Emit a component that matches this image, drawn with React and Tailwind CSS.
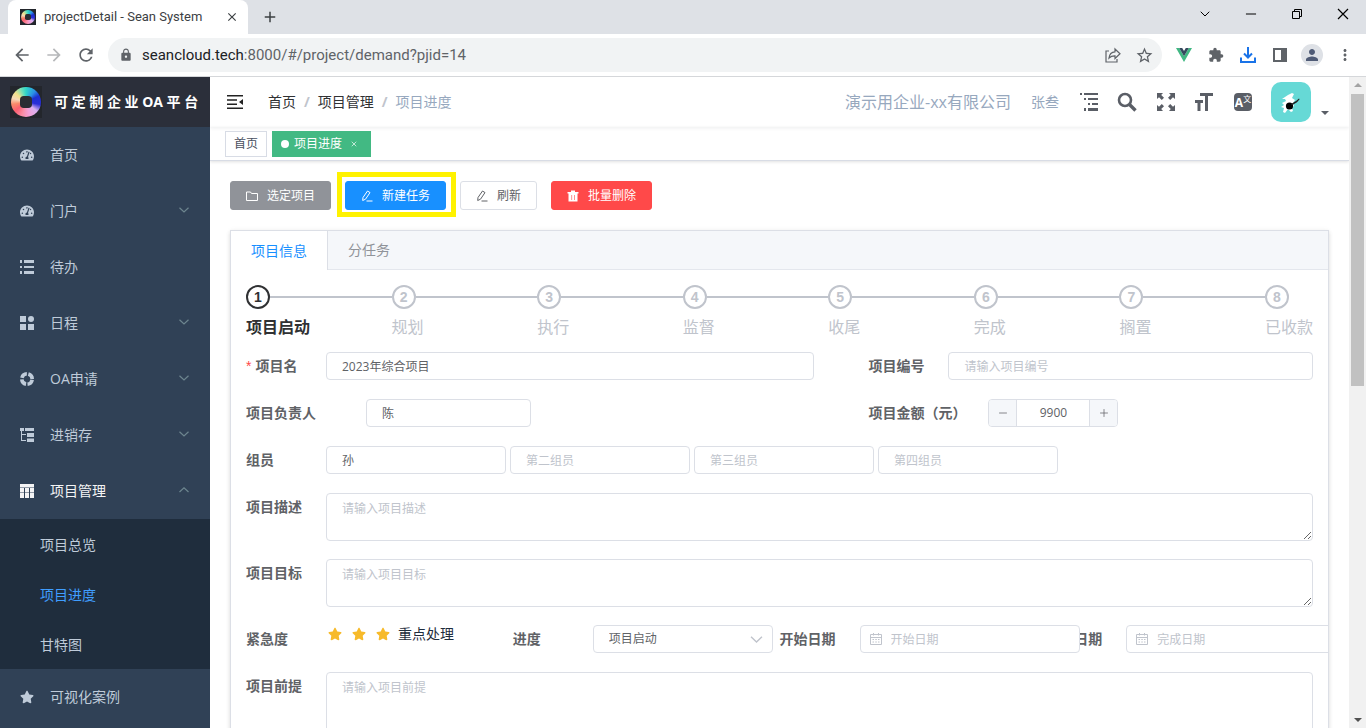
import React, { useState } from "react";
import {
  MdArrowBack,
  MdArrowForward,
  MdRefresh,
  MdLock,
  MdStarBorder,
  MdExtension,
  MdPerson,
  MdMoreVert,
  MdClose,
  MdAdd,
} from "react-icons/md";
import { FaTachometerAlt, FaStar } from "react-icons/fa";
import { ChevronDown, Minus, Plus, X } from "lucide-react";

const steps = ["项目启动", "规划", "执行", "监督", "收尾", "完成", "搁置", "已收款"];

const inputBase =
  "h-7 min-w-0 rounded border border-[#dcdfe6] bg-white px-[15px] text-xs text-[#606266] placeholder:text-[#c0c4cc] focus:outline-none focus:border-[#1890ff]";

function LogoMark({ className }) {
  return (
    <span className={"flex shrink-0 bg-[#23262c] p-px " + className} aria-hidden="true">
      <span className="flex flex-1 items-center justify-center rounded-full bg-[conic-gradient(#2fd6c8,#2a8fe6_40deg,#1c2fd0_65deg,#2a2fd8_100deg,#d9b0f0_130deg,#f3a0d8_165deg,#f98fa8_195deg,#fb5f70_230deg,#f98a6a_260deg,#f6d9b8_285deg,#f3e08a_310deg,#6fe0b8_340deg,#2fd6c8)]">
        <span className="size-5/12 rounded-[30%] bg-[#2b2d33]" />
      </span>
    </span>
  );
}

function Chevron({ up, className }) {
  return (
    <svg viewBox="0 0 14 14" className={className} fill="none" stroke="currentColor" strokeWidth="1.200" aria-hidden="true">
      <path d={up ? "M2.500 9L7 4.800 11.500 9" : "M2.500 4.800L7 9l4.500-4.200"} />
    </svg>
  );
}

function ListIcon() {
  return (
    <svg viewBox="0 0 14 14" className="size-3.5" fill="currentColor">
      <path d="M0 0h2v3H0zM4 0h10v3H4zM0 6h2v2H0zM4 6h10v2H4zM0 11h2v3H0zM4 11h10v3H4z" />
    </svg>
  );
}

function BlocksIcon() {
  return (
    <svg viewBox="0 0 14 14" className="size-3.5" fill="currentColor">
      <path d="M0 0h6v6H0zM0 8h6v6H0zM8 8h6v6H8z" />
      <circle cx="11" cy="3" r="3" />
    </svg>
  );
}

function RingIcon() {
  return (
    <svg viewBox="0 0 14 14" className="size-3.5" fill="none" stroke="currentColor">
      <circle cx="7" cy="7" r="5.200" strokeWidth="3.600" strokeDasharray="6.600 1.568" strokeDashoffset="-0.800" />
    </svg>
  );
}

function TreeIcon() {
  return (
    <svg viewBox="0 0 14 14" className="size-3.5" fill="currentColor">
      <path d="M0 0h4v3H2v3h4v1H2v5h4v1H1V3H0zM5 0h9v3H5zM7 5h7v4H7zM7 10.500h7V14H7z" />
    </svg>
  );
}

function TableIcon() {
  return (
    <svg viewBox="0 0 14 14" className="size-3.5" fill="currentColor">
      <path d="M0 0h14v3.500H0zM0 4h4v4.500H0zM5 4h4v4.500H5zM10 4h4v4.500h-4zM0 9h4v5H0zM5 9h4v5H5zM10 9h4v5h-4z" />
    </svg>
  );
}

const menu = [
  { label: "首页", icon: <FaTachometerAlt className="size-3.5" /> },
  { label: "门户", icon: <FaTachometerAlt className="size-3.5" />, arrow: true },
  { label: "待办", icon: <ListIcon /> },
  { label: "日程", icon: <BlocksIcon />, arrow: true },
  { label: "OA申请", icon: <RingIcon />, arrow: true },
  { label: "进销存", icon: <TreeIcon />, arrow: true },
  { label: "项目管理", icon: <TableIcon />, open: true, children: ["项目总览", "项目进度", "甘特图"] },
  { label: "可视化案例", icon: <FaStar className="size-3.5" /> },
];

function BrowserBar() {
  return (
    <header className="shrink-0 border-b border-[#d5d7da] bg-white text-[#5f6368]">
      <div className="flex h-[34px] bg-[#dee1e6]">
        <div className="ml-2 flex w-60 items-center rounded-t-lg bg-white pr-[9px] pl-3 text-[#3c4043]">
          <LogoMark className="size-4" />
          <span className="ml-2 flex-1 whitespace-nowrap font-[Roboto,sans-serif] text-[13px]">projectDetail - Sean System</span>
          <button aria-label="关闭标签页">
            <MdClose className="size-3.5" />
          </button>
        </div>
        <button className="ml-[13px] text-[#3c4043]" aria-label="新标签页">
          <MdAdd className="size-[18px]" />
        </button>
        <div className="ml-auto flex items-center gap-[30px] pr-[15px] pb-1.5 text-black">
          <button aria-label="搜索标签页">
            <ChevronDown className="size-4" strokeWidth={1.5} />
          </button>
          <button aria-label="最小化">
            <Minus className="size-4" strokeWidth={1.5} />
          </button>
          <button aria-label="还原">
            <svg viewBox="0 0 16 16" className="size-4" fill="none" stroke="currentColor">
              <path d="M3.500 5.500h7v7h-7zM5.500 5.500v-2h7v7h-2" />
            </svg>
          </button>
          <button aria-label="关闭">
            <svg viewBox="0 0 16 16" className="size-4" fill="none" stroke="currentColor" strokeWidth="1.200">
              <path d="M3 3l10 10M13 3L3 13" />
            </svg>
          </button>
        </div>
      </div>
      <div className="flex h-[42px] items-center pr-[13px] pl-3">
        <button aria-label="后退">
          <MdArrowBack className="size-5" />
        </button>
        <button className="ml-3 text-[#b6b8ba]" aria-label="前进">
          <MdArrowForward className="size-5" />
        </button>
        <button className="ml-3" aria-label="刷新页面">
          <MdRefresh className="size-5" />
        </button>
        <div className="ml-3 flex h-[34px] flex-1 items-center rounded-full bg-[#f1f3f4] pr-2 pl-[11px]">
          <MdLock className="size-3.5" />
          <span className="ml-[9px] flex-1 font-[Roboto,sans-serif] text-[15px]">
            <span className="text-[#202124]">seancloud.tech</span>:8000/#/project/demand?pjid=14
          </span>
          <button aria-label="分享">
            <svg viewBox="0 0 16 16" className="size-4" fill="none" stroke="currentColor" strokeWidth="1.200">
              <path d="M4 4H1v11h11v-3" />
              <path d="M4 11c.5-4 2.500-6 6-6.200V2l5 4.800-5 4.700V8.800C7.500 8.700 5.500 9.500 4 11z" />
            </svg>
          </button>
          <button className="ml-3.5" aria-label="收藏">
            <MdStarBorder className="size-[19px]" />
          </button>
        </div>
        <div className="ml-3.5 flex items-center gap-4">
          <svg viewBox="0 0 16 16" className="size-4" aria-hidden="true">
            <path d="M0 1h3.200L8 9.200 12.800 1H16L8 15z" fill="#41b883" />
            <path d="M3.200 1h3L8 4l1.800-3h3L8 9.200z" fill="#35495e" />
          </svg>
          <MdExtension className="size-4" />
          <svg viewBox="0 0 16 16" className="size-4" fill="none" stroke="#1a73e8" strokeWidth="2" aria-hidden="true">
            <path d="M8 0v10M4 6.500l4 4 4-4M1 10.500V15h14v-4.500" />
          </svg>
          <svg viewBox="0 0 16 16" className="size-4" aria-hidden="true">
            <path d="M1 1h14v14H1zM3 3v10h6V3z" fill="currentColor" fillRule="evenodd" />
          </svg>
          <span className="-mx-[3px] flex size-[22px] items-center justify-center rounded-full bg-[#dee1e6] text-[#4f5b76]">
            <MdPerson className="size-[18px]" />
          </span>
          <MdMoreVert className="-mr-px size-[18px]" />
        </div>
      </div>
    </header>
  );
}

function Sidebar() {
  return (
    <aside className="w-[210px] shrink-0 overflow-hidden bg-[#304156] text-sm text-[#bfcbd9]">
      <a href="#/" className="flex h-[50px] items-center bg-[#2b2f3a] pl-2.5 font-bold whitespace-nowrap text-white">
        <LogoMark className="mr-3 size-8" />
        可 定 制 企 业 OA 平 台
      </a>
      <nav>
        {menu.map((item) => (
          <div key={item.label}>
            <a href="#/" className={"flex h-14 items-center px-5 " + (item.open ? "text-[#f4f4f5]" : "")}>
              {item.icon}
              <span className="ml-4 flex-1">{item.label}</span>
              {(item.arrow || item.open) && <Chevron up={item.open} className="-mr-px mb-0.5 size-3.5 text-[#6d868f]" />}
            </a>
            {item.children && (
              <div className="bg-[#1f2d3d]">
                {item.children.map((child) => (
                  <a
                    key={child}
                    href="#/project"
                    className={"flex h-[50px] items-center pt-px pl-10 " + (child === "项目进度" ? "text-[#409eff]" : "")}
                  >
                    {child}
                  </a>
                ))}
              </div>
            )}
          </div>
        ))}
      </nav>
    </aside>
  );
}

function Navbar() {
  return (
    <div className="flex h-[50px] items-center pr-5 pl-4 text-sm shadow-[0_1px_4px_rgba(0,21,41,0.08)]">
      <button aria-label="收起菜单" className="text-[#222]">
        <svg viewBox="0 0 18 16" className="h-4 w-[18px]" fill="currentColor">
          <path d="M1 1h16v1.500H1zM1 5.200h10v1.500H1zM1 9.400h10v1.500H1zM1 13.500h16V15H1zM17 5v6l-4-3z" />
        </svg>
      </button>
      <nav className="ml-6 flex gap-2">
        <a href="#/" className="text-[#303133]">首页</a>
        <span className="font-bold text-[#c0c4cc]">/</span>
        <a href="#/project" className="text-[#303133]">项目管理</a>
        <span className="font-bold text-[#c0c4cc]">/</span>
        <span className="text-[#97a8be]">项目进度</span>
      </nav>
      <div className="ml-auto flex items-center text-[#5a5e66]">
        <span className="text-base text-[#97a8be]">演示用企业-xx有限公司</span>
        <span className="ml-5 text-[#97a8be]">张叁</span>
        <button className="ml-5" aria-label="目录">
          <svg viewBox="0 0 20 20" className="size-5" fill="currentColor">
            <path d="M1 1h2v2H1zM5 1h14v2H5zM5 6h2v2H5zM9 6h10v2H9zM9 11h2v2H9zM13 11h6v2h-6zM5 16h2v3H5zM9 16h10v3H9z" />
          </svg>
        </button>
        <button className="ml-[18px]" aria-label="搜索">
          <svg viewBox="0 0 20 20" className="size-5" fill="none" stroke="currentColor">
            <circle cx="8" cy="8" r="6" strokeWidth="2.600" />
            <path d="M12.500 12.500l6 6" strokeWidth="3.400" />
          </svg>
        </button>
        <button className="ml-[19px]" aria-label="全屏">
          <svg viewBox="0 0 20 20" className="size-5" fill="currentColor">
            <path d="M1 1h6L5.200 3 8 5.800 5.800 8 3 5.200 1 7zM19 1v6l-2-1.800L14.200 8 12 5.800 14.800 3 13 1zM1 19v-6l2 1.800L5.800 12 8 14.200 5.200 17 7 19zM19 19h-6l1.800-2-2.800-2.800 2.200-2.200 2.800 2.800 2-1.800z" />
          </svg>
        </button>
        <button className="ml-[18px]" aria-label="布局大小">
          <svg viewBox="0 0 20 20" className="size-5" fill="currentColor">
            <path d="M6 1h13v3h-5v15h-3V4H6zM1 8h8v3H6.500v8h-3v-8H1z" />
          </svg>
        </button>
        <button
          className="mx-px ml-5 flex size-[18px] justify-center overflow-hidden rounded-sm bg-[#5a5e66] text-white"
          aria-label="语言"
        >
          <span className="text-xs leading-5 font-bold">A</span>
          <span className="pt-px text-[8px] leading-[10px]">文</span>
        </button>
        <button className="ml-[18px] flex items-end gap-2.5" aria-label="用户菜单">
          <svg viewBox="0 0 40 40" className="size-10 rounded-[10px]">
            <rect width="40" height="40" fill="#66d9d6" />
            <path
              d="M11 17l6-4 4-2 2 1-2 4 3 2-2 3 1 3-2 2 1 3-2 1-3-3-3 4-2-1 1-4-3-1 3-2-2-2 4-2-1-2z"
              fill="#fff"
            />
            <circle cx="18.500" cy="24" r="3.600" fill="#000" />
            <path d="M20 22l5-3 3-2.500.6.800-2.600 3-5 3z" fill="#222" />
          </svg>
          <svg viewBox="0 0 8 4" className="mb-[7px] h-1 w-2" fill="currentColor">
            <path d="M0 0h8L4 4z" />
          </svg>
        </button>
      </div>
    </div>
  );
}

function TagsView() {
  return (
    <div className="flex h-[34px] items-start gap-[5px] border-b border-[#d8dce5] px-[15px] pt-1 text-xs shadow-[0_1px_3px_0_rgba(0,0,0,0.12)]">
      <a href="#/" className="flex h-[26px] items-center border border-[#d8dce5] px-2 text-[#495060]">首页</a>
      <a href="#/project" className="flex h-[26px] items-center border border-[#42b983] bg-[#42b983] px-2 text-white">
        <span className="mr-[5px] size-2 rounded-full bg-white" />
        项目进度
        <X className="mr-1 ml-2 size-2" strokeWidth={2} />
      </a>
    </div>
  );
}

function PenIcon() {
  return (
    <svg viewBox="0 0 12 12" className="size-3" fill="none" stroke="currentColor">
      <path d="M2 7.500L6.500 1l2.500 1.600-4.500 6.600-2.800 1.300zM5.500 11h6" />
    </svg>
  );
}

function Toolbar() {
  const btn = "flex h-[29px] items-center gap-[9px] rounded-[3px] border px-[15px] text-xs whitespace-nowrap ";
  return (
    <div className="flex gap-3.5">
      <button className={btn + "border-[#909399] bg-[#909399] text-white"}>
        <svg viewBox="0 0 12 12" className="size-3" fill="none" stroke="currentColor">
          <path d="M.5 2h4l1 1.500h6V10.500H.5z" />
        </svg>
        选定项目
      </button>
      <div className="relative">
        <button className={btn + "border-[#1890ff] bg-[#1890ff] text-white"}>
          <PenIcon />
          新建任务
        </button>
        <span className="pointer-events-none absolute -top-[9px] -right-2.5 -bottom-[7px] -left-2 border-[5px] border-[#fff200]" />
      </div>
      <button className={btn + "border-[#dcdfe6] bg-white text-[#606266]"}>
        <PenIcon />
        刷新
      </button>
      <button className={btn + "border-[#ff4949] bg-[#ff4949] text-white"}>
        <svg viewBox="0 0 12 12" className="size-3" fill="currentColor">
          <path d="M4 .5h4V2h3.500v1.500H.5V2H4zM1.500 3.500h9v8h-9zM4.500 5v5h.6V5zM7 5v5h.6V5z" fillRule="evenodd" />
        </svg>
        批量删除
      </button>
    </div>
  );
}

function Steps() {
  return (
    <ol className="flex">
      {steps.map((title, i) => {
        const last = i === steps.length - 1;
        return (
          <li key={title} className={last ? "shrink-0" : "min-w-0 flex-1"}>
            <div className="flex items-center">
              <span
                className={
                  "flex size-6 items-center justify-center rounded-full border-2 font-['Liberation_Sans',sans-serif] text-sm leading-none font-bold " +
                  (i === 0 ? "border-[#303133] text-[#303133]" : "border-[#c0c4cc] text-[#c0c4cc]")
                }
              >
                {i + 1}
              </span>
              {!last && <span className="h-0.5 flex-1 bg-[#c0c4cc]" />}
            </div>
            <div className={"text-base leading-9 " + (i === 0 ? "font-bold text-[#303133]" : "text-[#c0c4cc]")}>{title}</div>
          </li>
        );
      })}
    </ol>
  );
}

function Field({ id, label, wide, required, children }) {
  return (
    <div className="flex min-w-0">
      <label
        htmlFor={id}
        className={"shrink-0 text-sm leading-7 font-bold whitespace-nowrap text-[#606266] " + (wide ? "w-[120px]" : "w-20")}
      >
        {required && <span className="mr-1 font-['Liberation_Sans',sans-serif] font-normal text-[#ff4949]">*</span>}
        {label}
      </label>
      {children}
    </div>
  );
}

function TextArea({ id, label, rows }) {
  return (
    <Field id={id} label={label}>
      <textarea
        id={id}
        placeholder={"请输入" + label}
        className={
          "block flex-1 resize-y rounded border border-[#dcdfe6] px-[15px] py-1.5 text-xs leading-[18px] text-[#606266] placeholder:text-[#c0c4cc] focus:outline-none " +
          (rows === 3 ? "h-[72px]" : "h-12")
        }
      />
    </Field>
  );
}

function DateInput({ id, placeholder }) {
  return (
    <div className="relative z-10 w-[220px] shrink-0">
      <input id={id} placeholder={placeholder} className={inputBase + " w-full pl-[30px]"} />
      <svg
        viewBox="0 0 12 12"
        className="absolute top-[7px] left-2.5 h-3.5 w-3 text-[#c0c4cc]"
        fill="none"
        stroke="currentColor"
        aria-hidden="true"
      >
        <path d="M.5 1.500h11v10H.5zM.5 4.500h11M3.500 0v2.500M8.500 0v2.500M2.500 6.500h1.500M5.300 6.500h1.500M8 6.500h1.500M2.500 9h1.500M5.300 9h1.500M8 9h1.500" />
      </svg>
    </div>
  );
}

function ProjectForm() {
  const [amount, setAmount] = useState(9900);

  return (
    <form className="flex flex-col pt-[7px]" onSubmit={(e) => e.preventDefault()}>
      <div className="mb-[19px] grid grid-cols-[7fr_5fr]">
        <div className="pr-[54px]">
          <Field id="name" label="项目名" required>
            <input id="name" defaultValue="2023年综合项目" className={inputBase + " flex-1"} />
          </Field>
        </div>
        <Field id="code" label="项目编号">
          <input id="code" placeholder="请输入项目编号" className={inputBase + " flex-1"} />
        </Field>
      </div>
      <div className="mb-[19px] grid grid-cols-[7fr_5fr]">
        <Field id="owner" label="项目负责人" wide>
          <input id="owner" defaultValue="陈" className={inputBase + " w-[165px]"} />
        </Field>
        <Field id="amount" label="项目金额（元）" wide>
          <div className="flex h-7 w-[130px] overflow-hidden rounded border border-[#dcdfe6] text-[#606266]">
            <button
              type="button"
              aria-label="减少"
              onClick={() => setAmount(amount - 1)}
              className="flex w-7 items-center justify-center border-r border-[#dcdfe6] bg-[#f5f7fa]"
            >
              <Minus className="size-3" strokeWidth={1.5} />
            </button>
            <input
              id="amount"
              value={amount}
              onChange={(e) => setAmount(Number(e.target.value) || 0)}
              className="min-w-0 flex-1 text-center text-xs focus:outline-none"
            />
            <button
              type="button"
              aria-label="增加"
              onClick={() => setAmount(amount + 1)}
              className="flex w-7 items-center justify-center border-l border-[#dcdfe6] bg-[#f5f7fa]"
            >
              <Plus className="size-3" strokeWidth={1.5} />
            </button>
          </div>
        </Field>
      </div>
      <div className="mb-[19px]">
        <Field id="member1" label="组员">
          <div className="flex gap-1">
            <input id="member1" defaultValue="孙" className={inputBase + " w-[180px]"} />
            <input aria-label="第二组员" placeholder="第二组员" className={inputBase + " w-[180px]"} />
            <input aria-label="第三组员" placeholder="第三组员" className={inputBase + " w-[180px]"} />
            <input aria-label="第四组员" placeholder="第四组员" className={inputBase + " w-[180px]"} />
          </div>
        </Field>
      </div>
      <div className="mb-[18px]">
        <TextArea id="desc" label="项目描述" />
      </div>
      <div className="mb-[18px]">
        <TextArea id="goal" label="项目目标" />
      </div>
      <div className="mb-[19px] grid grid-cols-4">
        <div className="flex">
          <span className="w-20 text-sm leading-7 font-bold text-[#606266]">紧急度</span>
          <div className="flex h-[18px] items-center text-sm text-[#1f2d3d]">
            <span className="flex gap-2.5 px-0.5 text-[#f7ba2a]">
              <FaStar className="size-3.5" />
              <FaStar className="size-3.5" />
              <FaStar className="size-3.5" />
            </span>
            <span className="ml-1.5">重点处理</span>
          </div>
        </div>
        <Field id="progress" label="进度">
          <div className="relative w-[180px]">
            <select id="progress" className={inputBase + " w-full appearance-none"}>
              <option>项目启动</option>
              <option>规划</option>
              <option>执行</option>
            </select>
            <Chevron className="pointer-events-none absolute top-1.5 right-2 size-[17px] text-[#c0c4cc]" />
          </div>
        </Field>
        <Field id="start" label="开始日期">
          <DateInput id="start" placeholder="开始日期" />
        </Field>
        <Field id="end" label="完成日期">
          <DateInput id="end" placeholder="完成日期" />
        </Field>
      </div>
      <TextArea id="premise" label="项目前提" rows={3} />
    </form>
  );
}

function Scrollbar() {
  return (
    <div className="flex w-[17px] shrink-0 flex-col items-center bg-[#f1f1f1] py-1.5" aria-hidden="true">
      <svg viewBox="0 0 8 4" className="h-1 w-2" fill="#a3a3a3">
        <path d="M0 4h8L4 0z" />
      </svg>
      <div className="mt-[7px] h-[292px] w-[13px] bg-[#c1c1c1]" />
      <svg viewBox="0 0 8 4" className="mt-auto h-1 w-2" fill="#505050">
        <path d="M0 0h8L4 4z" />
      </svg>
    </div>
  );
}

function App() {
  return (
    <div className="flex h-screen flex-col overflow-hidden bg-white font-['Open_Sans','Noto_Sans_CJK_SC',sans-serif]">
      <BrowserBar />
      <div className="flex min-h-0 flex-1">
        <Sidebar />
        <main className="min-w-0 flex-1 overflow-hidden">
          <Navbar />
          <TagsView />
          <div className="p-5">
            <Toolbar />
            <section className="mt-5 overflow-hidden border border-[#dcdfe6] bg-white shadow-[0_2px_4px_0_rgba(0,0,0,0.12),0_0_6px_0_rgba(0,0,0,0.04)]">
              <div role="tablist" className="flex h-[39px] border-b border-[#e4e7ed] bg-[#f5f7fa] text-sm">
                <button role="tab" aria-selected="true" className="-mb-px border-r border-[#dcdfe6] bg-white px-5 text-[#1890ff]">
                  项目信息
                </button>
                <button role="tab" aria-selected="false" className="px-5 text-[#909399]">
                  分任务
                </button>
              </div>
              <div className="p-[15px]">
                <Steps />
                <ProjectForm />
              </div>
            </section>
          </div>
        </main>
        <Scrollbar />
      </div>
    </div>
  );
}

export default App;
